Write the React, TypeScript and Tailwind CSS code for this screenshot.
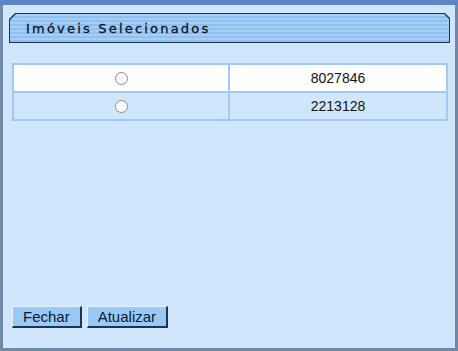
import React from "react";

function Radio() {
  return (
    <span className="inline-block w-[13px] h-[13px] rounded-full border border-[#8a8a8a] bg-white" />
  );
}

export default function App() {
  const rows = [
    { id: "8027846", bg: "bg-white" },
    { id: "2213128", bg: "bg-[#cfe6fd]" },
  ];
  return (
    <div className="w-[458px] h-[351px] bg-[#5e86c6] pt-[5px] flex flex-col">
      <div className="flex-1 flex flex-col bg-[#cfe6fd] border-l-[3px] border-r-[3px] border-b-[3px] border-[#6f89a6]">
        <div className="pl-[6px] pr-[5px] pt-[8px]">
          <div className="h-[30px] bg-[#1e3452] p-[1px] [clip-path:polygon(6px_0,calc(100%-5px)_0,100%_5px,100%_100%,0_100%,0_6px)]">
            <div className="h-full flex items-center pl-[16px] bg-[repeating-linear-gradient(180deg,#a7cff6_0px,#a7cff6_2px,#8fbff0_2px,#8fbff0_4px)] [clip-path:polygon(6px_0,calc(100%-5px)_0,100%_5px,100%_100%,0_100%,0_6px)]">
              <span className="text-[13px] tracking-[2.2px] text-[#0a1428] font-['DejaVu_Sans',sans-serif] leading-none pt-[1px] [-webkit-text-stroke:0.3px_#0a1428]">
                Imóveis Selecionados
              </span>
            </div>
          </div>
        </div>
        <div className="pl-[9px] pr-[7px] pt-[20px]">
          <div className="grid grid-cols-[214px_1fr] border-2 border-[#9fcaf6] gap-[2px] bg-[#9fcaf6]">
            {rows.map((r) => (
              <React.Fragment key={r.id}>
                <div className={`${r.bg} h-[26px] flex items-center justify-center`}>
                  <Radio />
                </div>
                <div className={`${r.bg} h-[26px] flex items-center justify-center text-[14px] text-[#111] font-['Liberation_Sans',Arial,sans-serif]`}>
                  {r.id}
                </div>
              </React.Fragment>
            ))}
          </div>
        </div>
        <div className="flex-1" />
        <div className="pl-[9px] pb-[20px] flex gap-[5px]">
          {["Fechar", "Atualizar"].map((t) => (
            <button
              key={t}
              className="h-[22px] px-[10px] bg-[#99c9f6] border border-t-[#e6f2ff] border-l-[#e6f2ff] border-b-2 border-r-2 border-b-[#1e3452] border-r-[#1e3452] text-[15px] leading-none text-[#0a1a30] font-['Liberation_Sans',Arial,sans-serif]"
            >
              {t}
            </button>
          ))}
        </div>
      </div>
    </div>
  );
}
